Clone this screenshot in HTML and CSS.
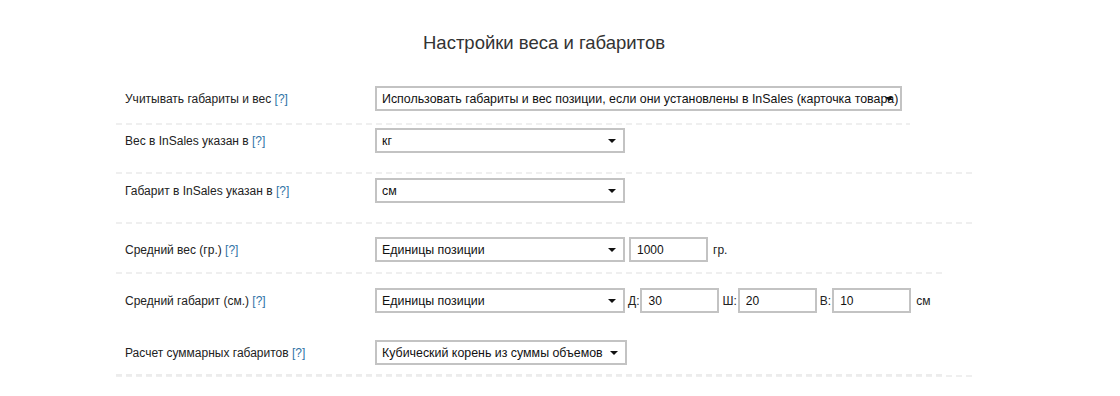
FILE: index.html
```html
<!DOCTYPE html>
<html lang="ru">
<head>
  <meta charset="UTF-8" />
  <meta name="viewport" content="width=device-width, initial-scale=1.0"/>
  <title>Настройки веса и габаритов</title>
  <link rel="stylesheet" href="styles.css">
</head>
<body>
  <div class="page">
    <h2 class="title">Настройки веса и габаритов</h2>

    <div class="settings">
      <div class="row row-first">
        <div class="label">Учитывать габариты и вес <a class="hint" href="#">[?]</a></div>
        <div class="field">
          <div class="select-wrap select-wide">
            <select>
              <option>Использовать габариты и вес позиции, если они установлены в InSales (карточка товара)</option>
            </select>
          </div>
        </div>
      </div>

      <div class="row">
        <div class="label">Вес в InSales указан в <a class="hint" href="#">[?]</a></div>
        <div class="field">
          <div class="select-wrap">
            <select><option>кг</option></select>
          </div>
        </div>
      </div>

      <div class="row row-third">
        <div class="label">Габарит в InSales указан в <a class="hint" href="#">[?]</a></div>
        <div class="field">
          <div class="select-wrap">
            <select><option>см</option></select>
          </div>
        </div>
      </div>

      <div class="row row-weight">
        <div class="label">Средний вес (гр.) <a class="hint" href="#">[?]</a></div>
        <div class="field">
          <div class="select-wrap">
            <select><option>Единицы позиции</option></select>
          </div>
          <input class="num num-weight" type="text" value="1000">
          <span class="unit">гр.</span>
        </div>
      </div>

      <div class="row row-size">
        <div class="label">Средний габарит (см.) <a class="hint" href="#">[?]</a></div>
        <div class="field">
          <div class="select-wrap">
            <select><option>Единицы позиции</option></select>
          </div>
          <span class="dim">Д:</span><input class="num" type="text" value="30">
          <span class="dim">Ш:</span><input class="num" type="text" value="20">
          <span class="dim">В:</span><input class="num" type="text" value="10">
          <span class="unit">см</span>
        </div>
      </div>

      <div class="row row-last">
        <div class="label">Расчет суммарных габаритов <a class="hint" href="#">[?]</a></div>
        <div class="field">
          <div class="select-wrap select-auto">
            <select><option>Кубический корень из суммы объемов</option></select>
          </div>
        </div>
      </div>
    </div>
  </div>
</body>
</html>
```

FILE: styles.css
```css
* {
  box-sizing: border-box;
}

body {
  margin: 0;
  font-family: "Liberation Sans", Arial, Helvetica, sans-serif;
  background: #fff;
  color: #222;
}

.page {
  width: 856px;
  margin-left: 116px;
}

.title {
  margin: 0;
  padding-top: 32px;
  margin-bottom: 21px;
  line-height: 22px;
  font-size: 18.5px;
  font-weight: normal;
  text-align: center;
  color: #333;
}

/* rows */
.row {
  display: flex;
  align-items: center;
  padding: 3px 0 21px;
  background: repeating-linear-gradient(to right, #efefef 0 6px, transparent 6px 10px) left bottom / 100% 2px no-repeat;
}

.row-first {
  width: 794px;
  padding: 11px 0 14px;
}

.row-third {
  padding: 4px 0 21px;
}

.row-weight {
  width: 826px;
  padding: 13px 0 12px;
}

.row-size {
  padding: 14px 0 13px;
  background: none;
}

.row-last {
  padding: 14px 0 12px;
  background:
    repeating-linear-gradient(to right, #ececec 0 6px, transparent 6px 10px) left calc(100% - 1px) / 826px 2px no-repeat,
    repeating-linear-gradient(to right, #efefef 0 6px, transparent 6px 10px) left bottom / 100% 2px no-repeat;
}

.label {
  width: 259px;
  flex-shrink: 0;
  padding-left: 9px;
  font-size: 12px;
  color: #222;
}

.hint {
  color: #2f73a6;
  text-decoration: none;
}

.field {
  display: flex;
  align-items: center;
  font-size: 12px;
}

/* select */
.select-wrap {
  position: relative;
  width: 250px;
}

.select-wide {
  width: 527px;
}

.select-auto {
  width: 252px;
}

.select-wrap select {
  -webkit-appearance: none;
  appearance: none;
  display: block;
  width: 100%;
  height: 25px;
  margin: 0;
  padding: 0 2px 0 5px;
  border: 2px solid #c3c3c3;
  border-radius: 0;
  background: #fff;
  font-family: inherit;
  font-size: 12.4px;
  color: #111;
  outline: none;
}

.select-wrap::after {
  content: "";
  position: absolute;
  right: 9px;
  top: 11px;
  border-left: 4px solid transparent;
  border-right: 4px solid transparent;
  border-top: 4px solid #111;
  pointer-events: none;
}

/* inputs */
.num {
  width: 79px;
  height: 25px;
  margin: 0;
  padding: 0 6px;
  border: 2px solid #c3c3c3;
  border-radius: 0;
  font-family: inherit;
  font-size: 12px;
  color: #111;
  outline: none;
}

.num-weight {
  margin-left: 4px;
}

.dim {
  margin: 0 1px 0 3px;
  color: #222;
}

.unit {
  margin-left: 5px;
  color: #222;
}
```
